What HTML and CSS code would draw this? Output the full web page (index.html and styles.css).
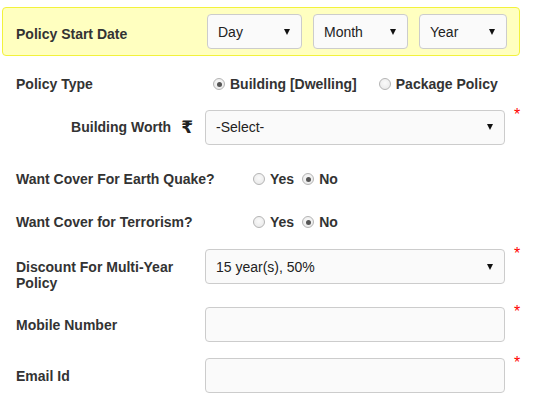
FILE: index.html
```html
<!DOCTYPE html>
<html>
<head>
<meta charset="utf-8">
<link rel="stylesheet" href="styles.css">
</head>
<body>
<form class="form">
  <div class="date-box">
    <div class="label">Policy Start Date</div>
    <div class="date-selects">
      <span class="sel sel-day"><select><option>Day</option></select></span>
      <span class="sel sel-month"><select><option>Month</option></select></span>
      <span class="sel sel-year"><select><option>Year</option></select></span>
    </div>
  </div>

  <div class="row row-type">
    <div class="label label-wide">Policy Type</div>
    <div class="radios radios-type">
      <label class="radio"><input type="radio" name="ptype" checked><span>Building [Dwelling]</span></label>
      <label class="radio"><input type="radio" name="ptype"><span>Package Policy</span></label>
    </div>
  </div>

  <div class="row row-worth">
    <div class="label label-right">Building Worth <span class="rupee">₹</span></div>
    <span class="sel sel-full"><select><option>-Select-</option></select></span>
    <span class="req">*</span>
  </div>

  <div class="row row-quake">
    <div class="label label-q">Want Cover For Earth Quake?</div>
    <div class="radios radios-yn">
      <label class="radio"><input type="radio" name="eq"><span>Yes</span></label>
      <label class="radio"><input type="radio" name="eq" checked><span>No</span></label>
    </div>
  </div>

  <div class="row row-terror">
    <div class="label label-q">Want Cover for Terrorism?</div>
    <div class="radios radios-yn">
      <label class="radio"><input type="radio" name="tr"><span>Yes</span></label>
      <label class="radio"><input type="radio" name="tr" checked><span>No</span></label>
    </div>
  </div>

  <div class="row row-discount">
    <div class="label label-wide label-two">Discount For Multi-Year Policy</div>
    <span class="sel sel-full"><select><option>15 year(s), 50%</option></select></span>
    <span class="req">*</span>
  </div>

  <div class="row row-mobile">
    <div class="label label-wide">Mobile Number</div>
    <input class="text" type="text">
    <span class="req">*</span>
  </div>

  <div class="row row-email">
    <div class="label label-wide">Email Id</div>
    <input class="text" type="text">
    <span class="req">*</span>
  </div>
</form>
</body>
</html>
```

FILE: styles.css
```css
html, body {
  margin: 0;
  padding: 0;
  background: #fff;
}

.form {
  font-family: "Liberation Sans", Arial, sans-serif;
  font-size: 14px;
  color: #333;
  padding-top: 7px;
}

.label {
  font-weight: bold;
  color: #333;
  line-height: 16px;
}

.date-box {
  display: flex;
  align-items: center;
  margin-left: 2px;
  width: 518px;
  height: 49px;
  box-sizing: border-box;
  background: #ffffc0;
  border: 1px solid #f2f23c;
  border-radius: 4px;
  padding-left: 13px;
}

.date-box .label {
  width: 191px;
  padding-top: 4px;
}

.date-selects {
  display: flex;
  gap: 11px;
}

.sel {
  position: relative;
  display: inline-block;
}

.sel select {
  appearance: none;
  -webkit-appearance: none;
  display: block;
  width: 100%;
  height: 35px;
  box-sizing: border-box;
  margin: 0;
  padding: 0 24px 0 10px;
  background: #fafafa;
  border: 1px solid #cccccc;
  border-radius: 4px;
  font-family: "Liberation Sans", Arial, sans-serif;
  font-size: 14px;
  color: #222;
  outline: none;
}

.sel::after {
  content: "";
  position: absolute;
  right: 12px;
  top: 50%;
  margin-top: -3px;
  width: 0;
  height: 0;
  border-left: 3.5px solid transparent;
  border-right: 3.5px solid transparent;
  border-top: 6px solid #111;
  pointer-events: none;
}

.sel-day, .sel-month { width: 95px; }
.sel-year { width: 88px; }
.sel-full { width: 300px; }

.row {
  display: flex;
  align-items: center;
  padding-left: 16px;
}

.label-wide { width: 189px; flex: none; }
.label-q { width: 237px; flex: none; }

.label-right {
  width: 177px;
  flex: none;
  text-align: right;
  padding-right: 12px;
  display: flex;
  justify-content: flex-end;
  align-items: center;
}

.rupee {
  font-family: "DejaVu Sans", sans-serif;
  font-weight: bold;
  font-size: 17px;
  margin-left: 10px;
  color: #222;
}

.label-two { align-self: flex-start; padding-top: 10px; }

.radios {
  display: flex;
  align-items: center;
}

.radios-type { margin-left: 8px; gap: 22px; }
.radios-yn { gap: 8px; }

.radio {
  display: flex;
  align-items: center;
  font-weight: bold;
  color: #333;
}

.radio input {
  appearance: none;
  -webkit-appearance: none;
  width: 12px;
  height: 12px;
  margin: 0 5px 0 0;
  border-radius: 50%;
  border: 1px solid #b4b4b4;
  background: radial-gradient(circle at 50% 40%, #fafafa 0%, #e6e6e6 100%);
  box-sizing: border-box;
  position: relative;
  flex: none;
}

.radio input:checked::after {
  content: "";
  position: absolute;
  left: 2.5px;
  top: 2.5px;
  width: 5px;
  height: 5px;
  border-radius: 50%;
  background: #555;
}

.req {
  align-self: flex-start;
  color: #ff0000;
  font-size: 16px;
  line-height: 16px;
  margin-left: 9px;
  margin-top: -3px;
}

.text {
  display: block;
  width: 300px;
  height: 35px;
  box-sizing: border-box;
  margin: 0;
  background: #fafafa;
  border: 1px solid #cccccc;
  border-radius: 4px;
  outline: none;
  padding: 0 10px;
  font-family: "Liberation Sans", Arial, sans-serif;
  font-size: 14px;
}

.row-type { height: 34px; margin-top: 11px; }
.row-worth { height: 34px; margin-top: 9px; }
.row-quake { height: 34px; margin-top: 18px; }
.row-terror { height: 34px; margin-top: 9px; }
.row-discount { height: 35px; margin-top: 10px; }
.row-mobile { height: 35px; margin-top: 23px; }
.row-email { height: 35px; margin-top: 16px; }
```
